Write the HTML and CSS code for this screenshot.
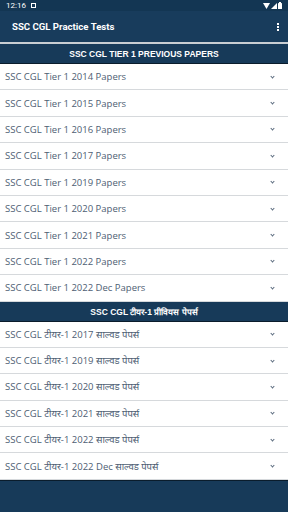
FILE: index.html
```html
<!DOCTYPE html>
<html lang="hi">
<head>
    <meta charset="UTF-8">
    <meta name="viewport" content="width=device-width, initial-scale=1.0">
    <title>SSC CGL Practice Tests</title>
    <link rel="stylesheet" href="styles.css">
</head>
<body>
    <div class="status-bar">
        <span class="time">12:16</span>
        <span class="notif"></span>
        <span class="status-icons">
            <svg width="7" height="6" viewBox="0 0 7 6"><path d="M0 0h7L3.5 6z" fill="#fff"/></svg>
            <svg width="6" height="6" viewBox="0 0 6 6"><path d="M0 6L6 0v6z" fill="#fff"/></svg>
            <svg width="4" height="7" viewBox="0 0 4 7"><rect x="0" y="1" width="4" height="6" rx="0.5" fill="#fff"/><rect x="1" y="0" width="2" height="1" fill="#fff"/></svg>
        </span>
    </div>
    <div class="app-bar">
        <span class="title">SSC CGL Practice Tests</span>
        <span class="menu"><i></i><i></i><i></i></span>
    </div>

    <div class="section-head">SSC CGL TIER 1 PREVIOUS PAPERS</div>
    <ul class="list">
        <li>SSC CGL Tier 1 2014 Papers</li>
        <li>SSC CGL Tier 1 2015 Papers</li>
        <li>SSC CGL Tier 1 2016 Papers</li>
        <li>SSC CGL Tier 1 2017 Papers</li>
        <li>SSC CGL Tier 1 2019 Papers</li>
        <li>SSC CGL Tier 1 2020 Papers</li>
        <li>SSC CGL Tier 1 2021 Papers</li>
        <li>SSC CGL Tier 1 2022 Papers</li>
        <li>SSC CGL Tier 1 2022 Dec Papers</li>
    </ul>

    <div class="section-head">SSC CGL टीयर-1 प्रीवियस पेपर्स</div>
    <ul class="list">
        <li>SSC CGL टीयर-1 2017 साल्वड पेपर्स</li>
        <li>SSC CGL टीयर-1 2019 साल्वड पेपर्स</li>
        <li>SSC CGL टीयर-1 2020 साल्वड पेपर्स</li>
        <li>SSC CGL टीयर-1 2021 साल्वड पेपर्स</li>
        <li>SSC CGL टीयर-1 2022 साल्वड पेपर्स</li>
        <li>SSC CGL टीयर-1 2022 Dec साल्वड पेपर्स</li>
    </ul>
    <div class="footer"></div>
</body>
</html>
```

FILE: styles.css
```css
body {
    margin: 0;
    width: 288px;
    height: 512px;
    overflow: hidden;
    background-color: #fff;
    font-family: 'Open Sans', 'Noto Sans', sans-serif;
    display: flex;
    flex-direction: column;
}
.status-bar {
    height: 11px;
    background-color: #133653;
    color: #fff;
    display: flex;
    align-items: center;
    padding: 0 6px;
    font-family: Roboto, sans-serif;
    font-size: 8px;
}
.notif {
    width: 5px;
    height: 5px;
    border: 1px solid #fff;
    margin-left: 5px;
    box-sizing: border-box;
}
.status-icons {
    margin-left: auto;
    display: flex;
    align-items: center;
    gap: 1px;
}
.app-bar {
    height: 31px;
    background-color: #183c5c;
    color: #fff;
    display: flex;
    align-items: center;
    padding: 0 6px 0 12px;
    border-bottom: 2px solid #c9ced3;
}
.title {
    font-family: Roboto, sans-serif;
    font-weight: bold;
    font-size: 9.6px;
}
.menu {
    margin-left: auto;
    display: flex;
    flex-direction: column;
    gap: 1px;
    padding: 0 3px;
}
.menu i {
    width: 2px;
    height: 2px;
    background-color: #fff;
}
.section-head {
    height: 19px;
    background-color: #173a59;
    border-bottom: 1px solid #0a1c2c;
    color: #fff;
    font-family: 'Liberation Sans Narrow', 'Liberation Sans', sans-serif;
    font-weight: bold;
    font-size: 8.5px;
    display: flex;
    align-items: center;
    justify-content: center;
}
.list {
    list-style: none;
    margin: 0;
    padding: 0;
}
.list li {
    height: 25.4px;
    border-bottom: 1px solid #d6d9dc;
    display: flex;
    align-items: center;
    padding: 0 5px;
    font-size: 9.5px;
    color: #4e5e73;
}
.list li::after {
    content: '';
    margin-left: auto;
    margin-right: 9px;
    margin-top: -1px;
    width: 2px;
    height: 2px;
    border-right: 1px solid #5a6a7e;
    border-bottom: 1px solid #5a6a7e;
    transform: rotate(45deg);
}
.footer {
    flex: 1;
    background-color: #173a59;
    border-top: 1px solid #0a1c2c;
}
```
